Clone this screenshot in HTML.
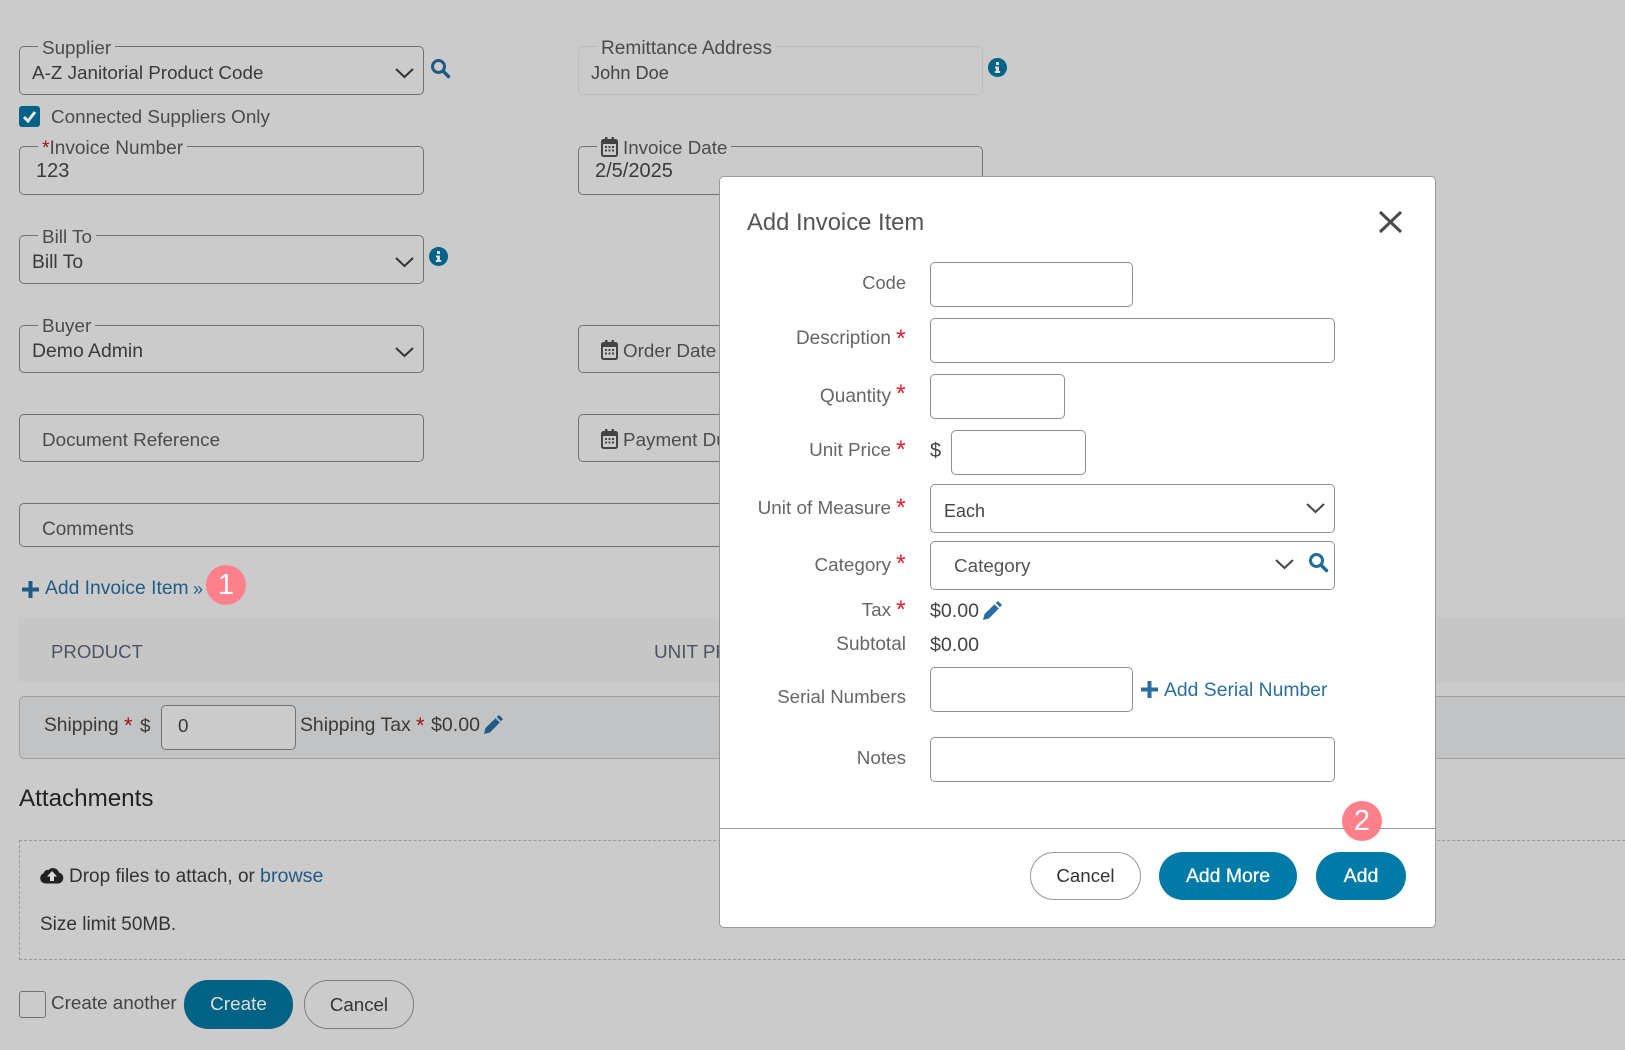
<!DOCTYPE html>
<html lang="en"><head><meta charset="utf-8"><title>Add Invoice Item</title>
<style>
html,body{margin:0;padding:0}
body{width:1625px;height:1050px;position:relative;overflow:hidden;background:#cbcbcb;font-family:"Liberation Sans",sans-serif;color:#3a3a3a}
.t{position:absolute;white-space:nowrap;line-height:24px;font-size:18.85px}
.b{position:absolute;box-sizing:border-box;border:1px solid #727272;border-radius:5px}
.l{color:#4b4b4b;background:#cbcbcb;padding:0 4px;margin-left:-4px}
svg{position:absolute;overflow:visible}
.m{position:absolute;left:719px;top:176px;width:717px;height:752px;box-sizing:border-box;background:#fff;border:1px solid #999;border-radius:5px;z-index:5}
.top{position:absolute;left:0;top:0;width:1625px;height:1050px;z-index:6}
.i{position:absolute;box-sizing:border-box;border:1px solid #8f8f8f;border-radius:5px;background:#fff}
.r{color:#666;text-align:right}
.s{position:absolute;color:#e0202c;font-size:25px;line-height:24px}
.ps{position:absolute;color:#9c0f1c;font-size:22px;line-height:24px}
.btn{position:absolute;box-sizing:border-box;border-radius:24px;text-align:center;font-size:18.7px}
.badge{position:absolute;width:40px;height:40px;border-radius:50%;background:#ff808b;color:#fff;text-align:center;line-height:40px;font-size:29px;z-index:7}
</style></head><body>

<!-- Background form -->
<div class="b" style="left:19px;top:46px;width:405px;height:49px"></div>
<span class="t l" style="left:42px;top:36px">Supplier</span>
<span class="t" style="left:32px;top:61px">A-Z Janitorial Product Code</span>
<svg style="left:394.500px;top:68px" width="19" height="10" viewBox="0 0 19 10"><path d="M1 1l8.500 8 8.500-8" fill="none" stroke="#333" stroke-width="2"/></svg>
<svg style="left:431px;top:59px" width="19" height="19" viewBox="0 0 19 19"><circle cx="7.500" cy="7.500" r="6" fill="none" stroke="#1f5b85" stroke-width="3"/><path d="M12 12l5.500 5.500" stroke="#1f5b85" stroke-width="3.500" stroke-linecap="round"/></svg>

<div class="b" style="left:578px;top:46px;width:405px;height:49px;border-color:#bdbdbd"></div>
<span class="t l" style="left:601px;top:37px;font-size:19.1px">Remittance Address</span>
<span class="t" style="left:591px;top:61px;color:#444;font-size:18.2px">John Doe</span>
<svg style="left:988px;top:58px" width="19" height="19" viewBox="0 0 19 19"><circle cx="9.500" cy="9.500" r="9.500" fill="#006385"/><path d="M8 4h3v3H8zM7 8.500h4V13h1.200v2H6.800v-2H8v-2.500H7z" fill="#ddd"/></svg>

<div style="position:absolute;left:19px;top:106px;width:21px;height:21px;background:#006385;border-radius:3px"></div>
<svg style="left:19px;top:106px" width="21" height="21" viewBox="0 0 21 21"><path d="M5 11l4 4 7-9" fill="none" stroke="#e8e8e8" stroke-width="3"/></svg>
<span class="t" style="left:51px;top:105px;color:#4b4b4b">Connected Suppliers Only</span>

<div class="b" style="left:19px;top:146px;width:405px;height:49px"></div>
<span class="t l" style="left:42px;top:137px;font-size:19.1px"><span style="color:#9c0f1c">*</span>Invoice Number</span>
<span class="t" style="left:36px;top:159px;font-size:20px">123</span>

<div class="b" style="left:578px;top:146px;width:405px;height:49px"></div>
<span class="t l" style="left:601px;top:136px;padding-left:26px;margin-left:-4px;font-size:18.8px">Invoice Date</span>
<svg style="left:601px;top:137px" width="17" height="20" viewBox="0 0 17 20"><path d="M4 0h2.500v3H4zM10.500 0H13v3h-2.500z" fill="#444"/><rect x="1" y="3" width="15" height="16" rx="1.500" fill="#ccc" stroke="#444" stroke-width="2"/><rect x="1" y="3" width="15" height="4" fill="#444"/><path d="M4 9h2v2H4zM7.500 9h2v2h-2zM11 9h2v2h-2zM4 12.500h2v2H4zM7.500 12.500h2v2h-2zM11 12.500h2v2h-2z" fill="#444"/></svg>
<span class="t" style="left:595px;top:159px;font-size:20px">2/5/2025</span>

<div class="b" style="left:19px;top:235px;width:405px;height:49px"></div>
<span class="t l" style="left:42px;top:225px">Bill To</span>
<span class="t" style="left:32px;top:251px;font-size:19.3px">Bill To</span>
<svg style="left:394.500px;top:257px" width="19" height="10" viewBox="0 0 19 10"><path d="M1 1l8.500 8 8.500-8" fill="none" stroke="#333" stroke-width="2"/></svg>
<svg style="left:429px;top:247px" width="19" height="19" viewBox="0 0 19 19"><circle cx="9.500" cy="9.500" r="9.500" fill="#006385"/><path d="M8 4h3v3H8zM7 8.500h4V13h1.200v2H6.800v-2H8v-2.500H7z" fill="#ddd"/></svg>

<div class="b" style="left:19px;top:325px;width:405px;height:48px"></div>
<span class="t l" style="left:42px;top:314px">Buyer</span>
<span class="t" style="left:32px;top:339px;font-size:19.4px">Demo Admin</span>
<svg style="left:394.500px;top:347px" width="19" height="10" viewBox="0 0 19 10"><path d="M1 1l8.500 8 8.500-8" fill="none" stroke="#333" stroke-width="2"/></svg>

<div class="b" style="left:578px;top:325px;width:405px;height:48px"></div>
<svg style="left:601px;top:340px" width="17" height="20" viewBox="0 0 17 20"><path d="M4 0h2.500v3H4zM10.500 0H13v3h-2.500z" fill="#444"/><rect x="1" y="3" width="15" height="16" rx="1.500" fill="#ccc" stroke="#444" stroke-width="2"/><rect x="1" y="3" width="15" height="4" fill="#444"/><path d="M4 9h2v2H4zM7.500 9h2v2h-2zM11 9h2v2h-2zM4 12.500h2v2H4zM7.500 12.500h2v2h-2zM11 12.500h2v2h-2z" fill="#444"/></svg>
<span class="t" style="left:623px;top:339px;color:#4b4b4b">Order Date</span>

<div class="b" style="left:19px;top:414px;width:405px;height:48px"></div>
<span class="t" style="left:42px;top:428px;color:#4b4b4b">Document Reference</span>

<div class="b" style="left:578px;top:414px;width:405px;height:48px"></div>
<svg style="left:601px;top:429px" width="17" height="20" viewBox="0 0 17 20"><path d="M4 0h2.500v3H4zM10.500 0H13v3h-2.500z" fill="#444"/><rect x="1" y="3" width="15" height="16" rx="1.500" fill="#ccc" stroke="#444" stroke-width="2"/><rect x="1" y="3" width="15" height="4" fill="#444"/><path d="M4 9h2v2H4zM7.500 9h2v2h-2zM11 9h2v2h-2zM4 12.500h2v2H4zM7.500 12.500h2v2h-2zM11 12.500h2v2h-2z" fill="#444"/></svg>
<span class="t" style="left:623px;top:428px;color:#4b4b4b">Payment Due</span>

<div class="b" style="left:19px;top:503px;width:1100px;height:44px"></div>
<span class="t" style="left:42px;top:518px;color:#4b4b4b;font-size:19px">Comments</span>

<svg style="left:22px;top:581px" width="17" height="17" viewBox="0 0 17 17"><path d="M6.500 0h4v6.500H17v4h-6.500V17h-4v-6.500H0v-4h6.500z" fill="#1f5b85"/></svg>
<span class="t" style="left:45px;top:577px;color:#1f5b85;font-size:19.3px">Add Invoice Item</span>
<span class="t" style="left:193px;top:577px;color:#1f5b85;font-size:18px">»</span>
<div class="badge" style="left:206px;top:565px;z-index:1">1</div>

<div style="position:absolute;left:19px;top:617px;width:1606px;height:65px;background:#c6c6c6"></div>
<span class="t" style="left:51px;top:640px;color:#4d5460;font-size:18.6px">PRODUCT</span>
<span class="t" style="left:654px;top:640px;color:#4d5460">UNIT PRICE</span>

<div class="b" style="left:19px;top:696px;width:1606px;height:63px;background:#c2c3c5;border-color:#9f9f9f;border-right:none;border-radius:5px 0 0 5px"></div>
<span class="t" style="left:44px;top:714px;font-size:19.2px">Shipping</span>
<span class="ps" style="left:124px;top:714px">*</span>
<span class="t" style="left:140px;top:714px">$</span>
<div class="b" style="left:161px;top:705px;width:135px;height:45px;background:#cbcbcb"></div>
<span class="t" style="left:178px;top:714px">0</span>
<span class="t" style="left:300px;top:713px;font-size:19.4px">Shipping Tax</span>
<span class="ps" style="left:416px;top:714px">*</span>
<span class="t" style="left:431px;top:713px;font-size:19.6px">$0.00</span>
<svg style="left:484px;top:715px" width="19" height="19" viewBox="0 0 19 19"><path d="M15 0l4 4-2.200 2.200L12.800 2zM11.500 3.200l4.300 4.300L6 17.500 0 19l1.500-6z" fill="#1f5b85"/></svg>

<span class="t" style="left:19px;top:787px;font-size:24.2px;color:#222">Attachments</span>

<div style="position:absolute;left:19px;top:840px;width:1606px;height:120px;box-sizing:border-box;border:1px dashed #999;border-right:none"></div>
<svg style="left:40px;top:866px" width="24" height="18" viewBox="0 0 24 18"><path d="M5.500 17.500a5.300 5.300 0 0 1-1.800-10.300 4 4 0 0 1 4.800-3.200A6.200 6.200 0 0 1 19 6.500a5.600 5.600 0 0 1-.5 11z" fill="#222"/><path d="M12 5l5 5.500h-3V15h-4v-4.500H7z" fill="#ddd"/></svg>
<span class="t" style="left:69px;top:865px;color:#333;font-size:19px">Drop files to attach, or</span>
<span class="t" style="left:260px;top:864px;color:#1f5b85;font-size:19.7px">browse</span>
<span class="t" style="left:40px;top:913px;color:#333;font-size:19px">Size limit 50MB.</span>

<div class="b" style="left:19px;top:991px;width:27px;height:27px;border-radius:3px"></div>
<span class="t" style="left:51px;top:991px;color:#444">Create another</span>
<div class="btn" style="left:184px;top:980px;width:109px;height:49px;background:#006385;color:#ddd;line-height:49px;font-size:18.9px">Create</div>
<div class="btn" style="left:304px;top:980px;width:110px;height:49px;border:1px solid #7f7f7f;line-height:47px;color:#333">Cancel</div>

<!-- Modal -->
<div class="m"></div>
<div class="top">
<span class="t" style="left:747px;top:211px;font-size:23.8px;color:#555">Add Invoice Item</span>
<svg style="left:1379px;top:211px" width="23" height="22" viewBox="0 0 23 22"><path d="M1 1l21 20M22 1L1 21" stroke="#4a4a4a" stroke-width="3" fill="none"/></svg>

<span class="t r" style="right:719px;top:271px;font-size:18.3px">Code</span>
<div class="i" style="left:930px;top:262px;width:203px;height:45px"></div>

<span class="t r" style="right:734px;top:327px;font-size:19px">Description</span><span class="s" style="left:896px;top:327px">*</span>
<div class="i" style="left:930px;top:318px;width:405px;height:45px"></div>

<span class="t r" style="right:734px;top:385px;font-size:19.1px">Quantity</span><span class="s" style="left:896px;top:382px">*</span>
<div class="i" style="left:930px;top:374px;width:135px;height:45px"></div>

<span class="t r" style="right:734px;top:439px;font-size:18.9px">Unit Price</span><span class="s" style="left:896px;top:438px">*</span>
<span class="t" style="left:930px;top:439px;color:#444;font-size:20px">$</span>
<div class="i" style="left:951px;top:430px;width:135px;height:45px"></div>

<span class="t r" style="right:734px;top:497px;font-size:18.9px">Unit of Measure</span><span class="s" style="left:896px;top:496px">*</span>
<div class="i" style="left:930px;top:484px;width:405px;height:49px"></div>
<span class="t" style="left:944px;top:499px;color:#444;font-size:18px">Each</span>
<svg style="left:1306px;top:503px" width="19" height="10" viewBox="0 0 19 10"><path d="M1 1l8.500 8 8.500-8" fill="none" stroke="#444" stroke-width="2"/></svg>

<span class="t r" style="right:734px;top:553px">Category</span><span class="s" style="left:896px;top:552px">*</span>
<div class="i" style="left:930px;top:541px;width:405px;height:49px"></div>
<span class="t" style="left:954px;top:554px;color:#555">Category</span>
<svg style="left:1275px;top:559px" width="19" height="10" viewBox="0 0 19 10"><path d="M1 1l8.500 8 8.500-8" fill="none" stroke="#444" stroke-width="2"/></svg>
<svg style="left:1309px;top:553px" width="19" height="19" viewBox="0 0 19 19"><circle cx="7.500" cy="7.500" r="6" fill="none" stroke="#1f6c9a" stroke-width="3"/><path d="M12 12l5.500 5.500" stroke="#1f6c9a" stroke-width="3.500" stroke-linecap="round"/></svg>

<span class="t r" style="right:734px;top:598px">Tax</span><span class="s" style="left:896px;top:598px">*</span>
<span class="t" style="left:930px;top:599px;color:#444;font-size:19.6px">$0.00</span>
<svg style="left:983px;top:601px" width="19" height="19" viewBox="0 0 19 19"><path d="M15 0l4 4-2.200 2.200L12.800 2zM11.500 3.200l4.300 4.300L6 17.500 0 19l1.500-6z" fill="#2a6ea0"/></svg>

<span class="t r" style="right:719px;top:633px;font-size:19px">Subtotal</span>
<span class="t" style="left:930px;top:633px;color:#444;font-size:19.6px">$0.00</span>

<span class="t r" style="right:719px;top:685px;font-size:18.7px">Serial Numbers</span>
<div class="i" style="left:930px;top:667px;width:203px;height:45px"></div>
<svg style="left:1141px;top:681px" width="17" height="17" viewBox="0 0 17 17"><path d="M6.500 0h4v6.500H17v4h-6.500V17h-4v-6.500H0v-4h6.500z" fill="#2a6ea0"/></svg>
<span class="t" style="left:1164px;top:678px;color:#2a6ea0;font-size:19.35px">Add Serial Number</span>

<span class="t r" style="right:719px;top:746px">Notes</span>
<div class="i" style="left:930px;top:737px;width:405px;height:45px"></div>

<div style="position:absolute;left:720px;top:828px;width:715px;height:1px;background:#999"></div>

<div class="btn" style="left:1030px;top:852px;width:111px;height:48px;background:#fff;border:1px solid #999;line-height:46px;color:#333">Cancel</div>
<div class="btn" style="left:1159px;top:852px;width:138px;height:48px;background:#007ba7;color:#fff;line-height:48px;font-size:19.4px;-webkit-text-stroke:.3px #fff">Add More</div>
<div class="btn" style="left:1316px;top:852px;width:90px;height:48px;background:#007ba7;color:#fff;line-height:48px;font-size:19.6px;-webkit-text-stroke:.3px #fff">Add</div>
<div class="badge" style="left:1342px;top:801px">2</div>
</div>
</body></html>
